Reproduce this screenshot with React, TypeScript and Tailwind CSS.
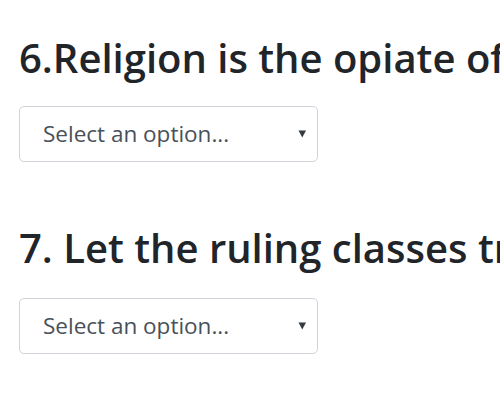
import React from "react";

function FakeSelect() {
  return (
    <div className="relative w-[299px] h-[56px] border border-[#ced4da] rounded-[5px] bg-white flex items-center pl-[23px] text-[22.5px] text-[#495057]">
      <span className="leading-none">Select an option...</span>
      <svg className="absolute left-[278px] top-[23px]" width="9" height="8" viewBox="0 0 9 8">
        <polygon points="0.5,0.5 8,0.5 4.25,7.5" fill="#343a40" />
      </svg>
    </div>
  );
}

export default function App() {
  return (
    <div className="w-[500px] h-[400px] overflow-hidden bg-white pl-[19px] pt-[34px] whitespace-nowrap" style={{ fontFamily: '"Open Sans", "Noto Sans", sans-serif' }}>
      <h2 className="text-[40px] leading-[48px] font-semibold text-[#212529]">6.Religion is the opiate of the masses</h2>
      <div className="mt-[24px]">
        <FakeSelect />
      </div>
      <h2 className="mt-[62px] text-[40px] leading-[48px] font-semibold text-[#212529]">7. Let the ruling classes tremble</h2>
      <div className="mt-[26px]">
        <FakeSelect />
      </div>
    </div>
  );
}
